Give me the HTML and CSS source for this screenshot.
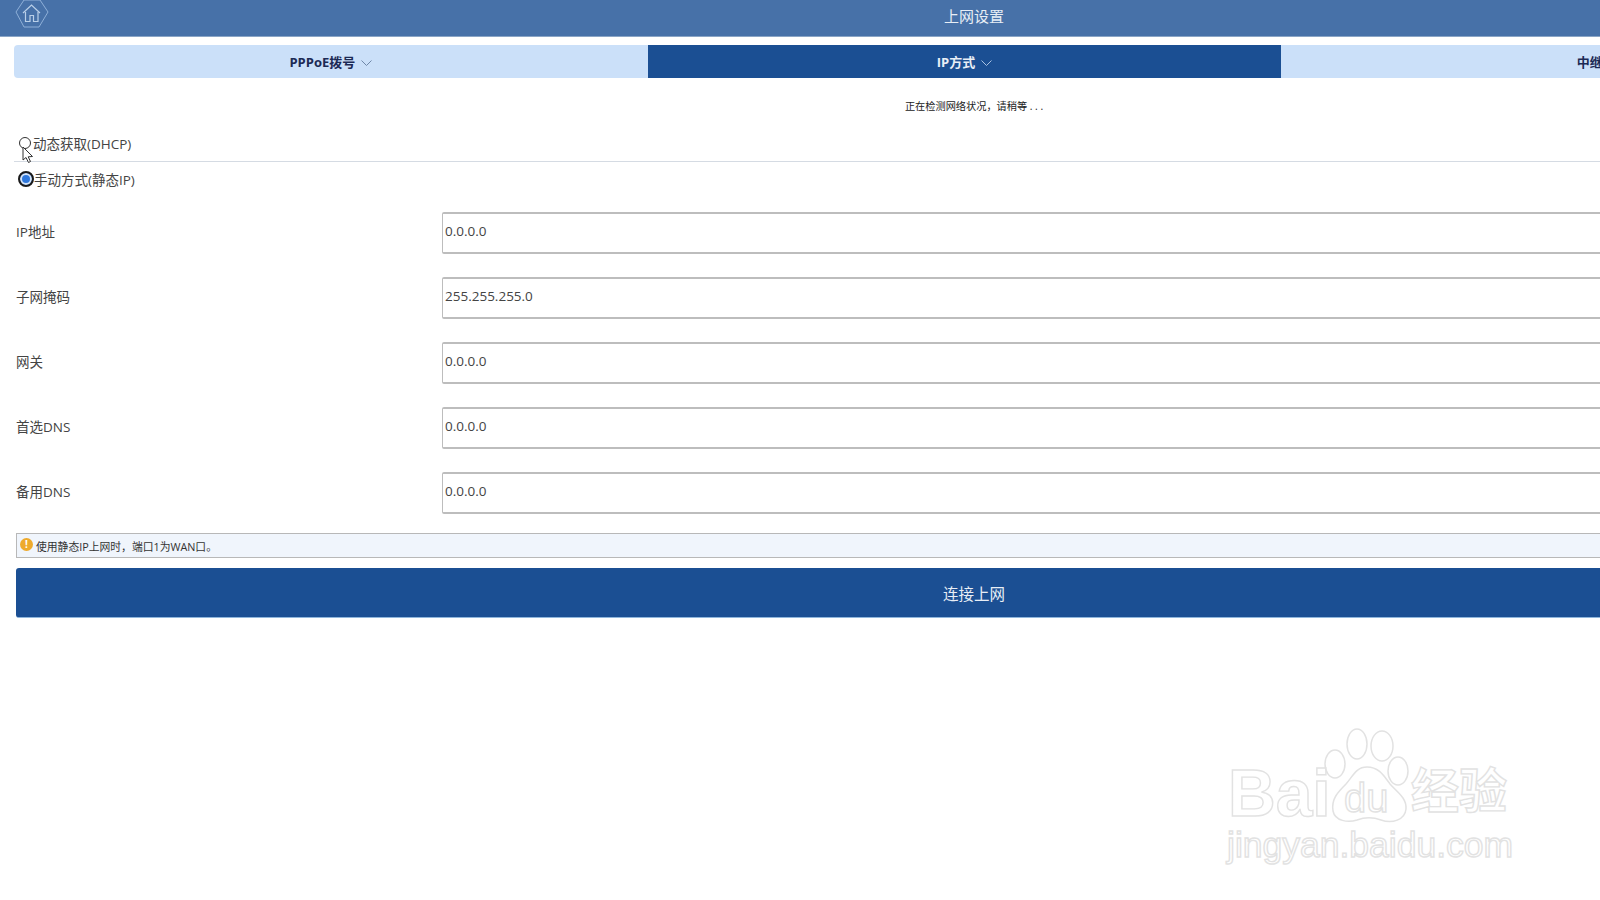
FILE: index.html
```html
<!DOCTYPE html>
<html lang="zh-CN">
  <head>
    <meta charset="UTF-8" />
    <title>上网设置</title>
    <link rel="stylesheet" href="styles.css">
  </head>
  <body>
    <div class="page">
      <header class="topbar">
        <a class="home" href="#">
          <svg width="36" height="34" viewBox="0 0 36 34" fill="none" stroke="#b9cfe8">
            <path d="M10 1 L26 1 L34 13 L25 28 L10 28 L2 13 Z" stroke-width="1" stroke="#8fb0d8" />
            <path d="M9 14 L17.5 6 L26 14" stroke-width="1.2" />
            <path d="M11.5 13 V22.5 H16 V16.5 H19.5 V22.5 H24 V13" stroke-width="1.2" />
          </svg>
        </a>
        <h1>上网设置</h1>
      </header>

      <div class="tabs">
        <div class="tab first">
          PPPoE拨号
          <svg class="chevron" width="11" height="6" viewBox="0 0 11 6"><path d="M0.5 0.5 L5.5 5.5 L10.5 0.5" /></svg>
        </div>
        <div class="tab active">
          IP方式
          <svg class="chevron" width="11" height="6" viewBox="0 0 11 6"><path d="M0.5 0.5 L5.5 5.5 L10.5 0.5" /></svg>
        </div>
        <div class="tab">
          中继
          <svg class="chevron" width="11" height="6" viewBox="0 0 11 6"><path d="M0.5 0.5 L5.5 5.5 L10.5 0.5" /></svg>
        </div>
      </div>

      <p class="status">正在检测网络状况，请稍等 . . .</p>

      <label class="radio-row first-radio">
        <input type="radio" name="mode" />
        <span>动态获取(DHCP)</span>
      </label>
      <label class="radio-row">
        <input type="radio" name="mode" checked />
        <span>手动方式(静态IP)</span>
      </label>

      <form class="fields">
        <div class="field">
          <label>IP地址</label>
          <input type="text" value="0.0.0.0" />
        </div>
        <div class="field">
          <label>子网掩码</label>
          <input type="text" value="255.255.255.0" />
        </div>
        <div class="field">
          <label>网关</label>
          <input type="text" value="0.0.0.0" />
        </div>
        <div class="field">
          <label>首选DNS</label>
          <input type="text" value="0.0.0.0" />
        </div>
        <div class="field">
          <label>备用DNS</label>
          <input type="text" value="0.0.0.0" />
        </div>
      </form>

      <div class="notice">
        <span class="notice-icon">!</span>
        <span>使用静态IP上网时，端口1为WAN口。</span>
      </div>

      <button class="connect" type="button">连接上网</button>

      <!-- mouse pointer -->
      <svg class="pointer" width="13" height="18" viewBox="0 0 13 18">
        <path d="M1 1 V14 L4 11.5 L6.5 16.5 L8.5 15.5 L6.2 10.8 L10.5 10.5 Z" fill="#fff" stroke="#333" stroke-width="1" />
      </svg>

      <!-- watermark -->
      <div class="watermark">
        <svg class="paw" width="90" height="102" viewBox="0 0 90 102">
          <ellipse cx="33" cy="20" rx="10" ry="15" />
          <ellipse cx="58" cy="22" rx="11" ry="15" />
          <ellipse cx="11" cy="40" rx="10" ry="14" />
          <ellipse cx="74" cy="47" rx="10" ry="14" />
          <path d="M43 43 C32 43 29 52 22 60 C14 68 7 75 9 87 C11 97 24 99 33 96 C41 93 49 93 57 96 C68 100 81 96 82 85 C83 74 73 68 66 60 C60 52 55 43 43 43 Z" />
        </svg>
        <span class="wm-bai">Bai</span>
        <span class="wm-du">du</span>
        <span class="wm-cn">经验</span>
        <span class="wm-url">jingyan.baidu.com</span>
      </div>
    </div>
  </body>
</html>
```

FILE: styles.css
```css
html,
body {
  margin: 0;
  padding: 0;
  height: 100%;
  overflow: hidden;
  background: #fff;
}

body {
  font-family: "Open Sans", "Noto Sans CJK SC", sans-serif;
  font-size: 13.5px;
  color: #333;
}

.page {
  position: relative;
  width: 1948px;
  height: 900px;
}

/* top bar */
.topbar {
  height: 37px;
  padding-bottom: 6px;
  background-color: #4771a8;
  border-bottom: 1px solid #8aa5c6;
  box-sizing: border-box;
  position: relative;
  display: flex;
  align-items: center;
  justify-content: center;
}

.topbar h1 {
  margin: 0;
  font-size: 15px;
  font-weight: normal;
  color: #e8eef6;
}

.home {
  position: absolute;
  left: 14px;
  top: -1px;
}

/* tabs */
.tabs {
  display: flex;
  margin: 8px 0 0 14px;
  width: 1901px;
  height: 33px;
}

.tab {
  flex: 1;
  display: flex;
  align-items: center;
  justify-content: center;
  gap: 6px;
  box-sizing: border-box;
  background-color: #cbe0f9;
  color: #1c2a55;
  font-size: 13px;
  font-weight: bold;
}

.tab.first {
  border-radius: 4px 0 0 4px;
}

.tab.active {
  background-color: #1b4f93;
  color: #e8eef6;
}

.chevron {
  margin-top: 3px;
  fill: none;
  stroke: #6f87a8;
}

.tab.active .chevron {
  stroke: #a9c2e2;
}

.status {
  margin: 20px 0 0;
  padding-bottom: 1px;
  text-align: center;
  font-size: 10.2px;
  line-height: 16px;
  color: #222;
}

/* radios */
.radio-row {
  display: flex;
  align-items: center;
  margin-left: 14px;
  height: 34px;
  color: #444;
}

.first-radio {
  margin-top: 9px;
  height: 37px;
  border-bottom: 1px solid #d5dbe3;
  box-sizing: content-box;
}

.radio-row input {
  appearance: none;
  box-sizing: border-box;
  width: 12px;
  height: 12px;
  margin: 0 2px 0 5px;
  border: 1.5px solid #333;
  border-radius: 50%;
  background: #fff;
}

.radio-row input:checked {
  width: 16px;
  height: 16px;
  margin: 0 0 0 4px;
  border: 2px solid #1a1a1a;
  background: #2f78dc;
  box-shadow: inset 0 0 0 2px #d5e4f7;
}

/* form rows */
.fields {
  margin: 16px 0 0 16px;
  display: flex;
  flex-direction: column;
  gap: 23px;
}

.field {
  display: flex;
  align-items: center;
  height: 42px;
}

.field label {
  width: 426px;
  color: #444;
  padding-bottom: 4px;
}

.field input {
  flex: 1;
  height: 42px;
  box-sizing: border-box;
  padding: 0 2px 5px 2px;
  border: 1px solid #bdbdbd;
  border-width: 2px 2px 2px 1.5px;
  border-radius: 2px;
  font-family: inherit;
  font-size: 13.5px;
  color: #444;
  outline: none;
}

/* notice + button */
.notice {
  margin: 19px 0 0 16px;
  height: 25px;
  box-sizing: border-box;
  border: 1px solid #b8b8b8;
  background-color: #f0f5fc;
  display: flex;
  align-items: center;
  gap: 3px;
  padding-left: 3px;
  font-size: 10.8px;
  color: #333;
}

.notice-icon {
  width: 13px;
  height: 13px;
  margin-top: -2px;
  border-radius: 50%;
  background-color: #eeaa2c;
  color: #fff;
  font-size: 10px;
  font-weight: bold;
  line-height: 13px;
  text-align: center;
}

.connect {
  display: block;
  width: calc(100% - 16px);
  height: 50px;
  margin: 10px 0 0 16px;
  padding: 1px 16px 0 0;
  background-color: #1b4f93;
  border: none;
  border-bottom: 1px solid #8fb6dc;
  border-radius: 3px;
  color: #e8eef6;
  font-family: inherit;
  font-size: 15.5px;
}

.pointer {
  position: absolute;
  left: 22px;
  top: 146px;
}

/* watermark */
.watermark {
  position: absolute;
  left: 0;
  top: 0;
  pointer-events: none;
  font-family: "Liberation Sans", "Noto Sans CJK SC", sans-serif;
  color: transparent;
  -webkit-text-stroke: 1.4px #e2e2e2;
}

.watermark span {
  position: absolute;
  white-space: nowrap;
  line-height: 1;
}

.paw {
  position: absolute;
  left: 1324px;
  top: 724px;
  fill: #fff;
  stroke: #e2e2e2;
  stroke-width: 1.5;
}

.wm-bai {
  left: 1228px;
  top: 760px;
  font-size: 66px;
  font-weight: bold;
}

.wm-du {
  left: 1344px;
  top: 778px;
  font-size: 40px;
}

.wm-cn {
  left: 1411px;
  top: 768px;
  font-size: 48px;
  font-weight: bold;
}

.wm-url {
  left: 1227px;
  top: 828px;
  font-size: 35.5px;
}
```
